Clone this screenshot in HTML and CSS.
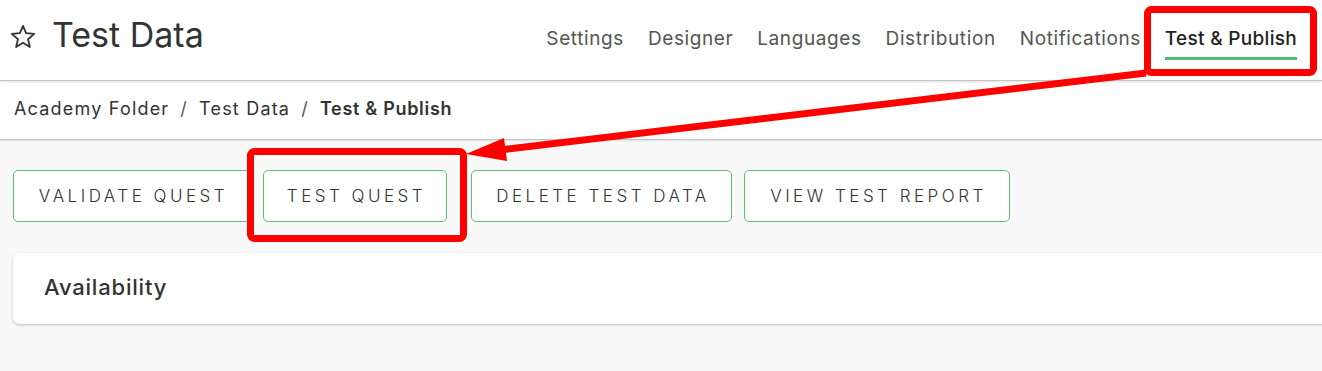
FILE: index.html
```html
<!DOCTYPE html>
<html lang="en">
<head>
<meta charset="utf-8">
<title>Test Data - Test &amp; Publish</title>
<link rel="stylesheet" href="styles.css">
</head>
<body>
<header class="topbar">
  <div class="title">
    <svg class="star" viewBox="0 0 26 24" width="26" height="24" aria-hidden="true">
      <path d="M13 1.8 L16.1 9.2 L24.2 9.9 L18 15.2 L19.9 23 L13 18.8 L6.1 23 L8 15.2 L1.8 9.9 L9.9 9.2 Z" fill="none" stroke="#333" stroke-width="1.8" stroke-linejoin="round"/>
    </svg>
    <h1>Test Data</h1>
  </div>
  <nav class="tabs">
    <a class="tab">Settings</a>
    <a class="tab">Designer</a>
    <a class="tab">Languages</a>
    <a class="tab">Distribution</a>
    <a class="tab">Notifications</a>
    <a class="tab active">Test &amp; Publish</a>
  </nav>
</header>
<div class="crumbs">
  <span class="crumb">Academy Folder</span>
  <span class="sep">/</span>
  <span class="crumb">Test Data</span>
  <span class="sep">/</span>
  <span class="crumb current">Test &amp; Publish</span>
</div>
<main class="content">
  <div class="actions">
    <button class="btn btn-validate">VALIDATE QUEST</button>
    <button class="btn btn-test">TEST QUEST</button>
    <button class="btn btn-delete">DELETE TEST DATA</button>
    <button class="btn btn-report">VIEW TEST REPORT</button>
  </div>
  <section class="card">
    <h2>Availability</h2>
  </section>
</main>
<svg class="annotation" width="1322" height="371" viewBox="0 0 1322 371" aria-hidden="true">
  <rect x="1147.5" y="9.5" width="166" height="63" rx="4" fill="none" stroke="#ff0000" stroke-width="7"/>
  <rect x="250.5" y="151.5" width="213" height="87" rx="4" fill="none" stroke="#ff0000" stroke-width="7"/>
  <line x1="1146" y1="73" x2="500" y2="150" stroke="#ff0000" stroke-width="7"/>
  <polygon points="466,154 504,138 507,161" fill="#ff0000"/>
</svg>
</body>
</html>
```
FILE: styles.css
```css
* { box-sizing: border-box; }
html, body { margin: 0; padding: 0; }
body {
  width: 1322px;
  height: 371px;
  overflow: hidden;
  background: #f9f9f9;
  font-family: Inter, "Open Sans", "Liberation Sans", sans-serif;
  color: #333;
  position: relative;
}
.topbar {
  height: 81px;
  background: #fff;
  display: flex;
  justify-content: space-between;
  align-items: flex-start;
  border-bottom: 1px solid #c4c4c4;
  box-shadow: 0 1px 2px rgba(0,0,0,0.12);
  position: relative;
  z-index: 2;
}
.title {
  display: flex;
  align-items: center;
  padding: 16px 0 0 10px;
}
.star { display: block; margin-top: 2px; }
.title h1 {
  margin: 0 0 0 16px;
  font-size: 34px;
  font-weight: 400;
  color: #333;
  line-height: 38px;
}
.tabs {
  display: flex;
  gap: 24px;
  padding: 28px 25px 0 0;
}
.tab {
  font-size: 19px;
  letter-spacing: 0.6px;
  color: #555;
  line-height: 22px;
  padding-bottom: 7px;
  border-bottom: 3px solid transparent;
}
.tab.active {
  color: #222;
  font-weight: 500;
  letter-spacing: 0.3px;
  border-bottom-color: #4cbb6c;
}
.crumbs {
  height: 59px;
  background: #fff;
  display: flex;
  align-items: center;
  padding: 0 0 4px 14px;
  font-size: 18px;
  letter-spacing: 1.2px;
  color: #333;
  border-bottom: 1px solid #c4c4c4;
  box-shadow: 0 1px 2px rgba(0,0,0,0.10);
  position: relative;
  z-index: 1;
}
.sep { color: #555; margin: 0 11px; }
.crumb.current { font-weight: 600; color: #333; letter-spacing: 0.7px; }
.content { padding: 30px 0 0 13px; }
.actions { display: flex; }
.btn {
  height: 52px;
  background: #fff;
  border: 1px solid #5cc374;
  border-radius: 5px;
  font-family: inherit;
  font-size: 17px;
  font-weight: 300;
  letter-spacing: 3.5px;
  color: #333;
  padding: 0 0 0 3px;
  text-align: center;
}
.btn-validate { width: 238px; margin-right: 12px; }
.btn-test { width: 184px; margin-right: 24px; }
.btn-delete { width: 261px; margin-right: 12px; }
.btn-report { width: 266px; }
.card {
  margin-top: 31px;
  margin-right: -20px;
  height: 71px;
  background: #fff;
  border-radius: 6px;
  box-shadow: 0 1px 3px rgba(0,0,0,0.25);
  display: flex;
  align-items: center;
  padding: 0 0 3px 31px;
}
.card h2 {
  margin: 0;
  font-size: 22px;
  font-weight: 500;
  letter-spacing: 0.8px;
  color: #333;
}
.annotation {
  position: absolute;
  left: 0;
  top: 0;
  z-index: 5;
  pointer-events: none;
}
```
